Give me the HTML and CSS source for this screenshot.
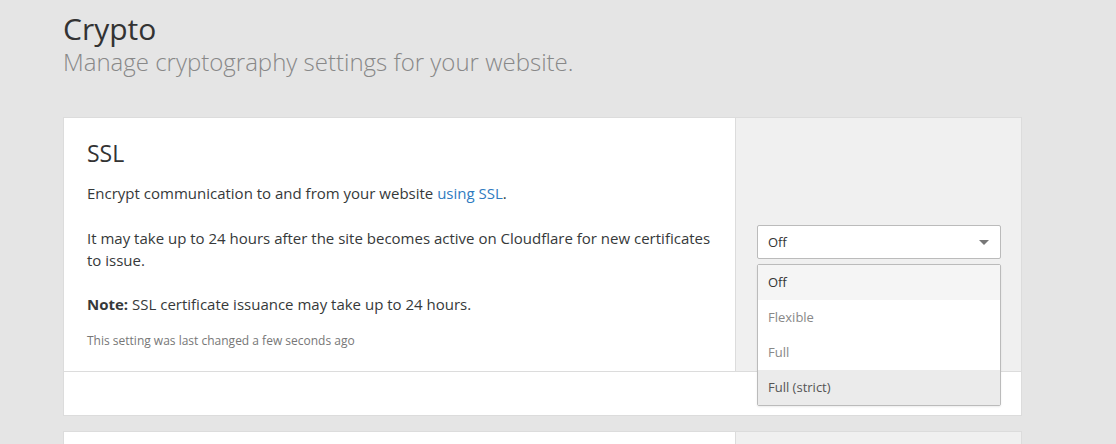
FILE: index.html
```html
<!DOCTYPE html>
<html lang="en">
<head>
<meta charset="utf-8">
<title>Crypto</title>
<link rel="stylesheet" href="styles.css">
</head>
<body>
<div class="page">
  <header class="page-header">
    <h1 class="page-title">Crypto</h1>
    <p class="page-subtitle">Manage cryptography settings for your website.</p>
  </header>

  <section class="card">
    <div class="card-main">
      <div class="card-body">
        <h2 class="card-title">SSL</h2>
        <p class="card-text">Encrypt communication to and from your website <a class="link" href="#">using SSL</a>.</p>
        <p class="card-text card-text-wrap">It may take up to 24 hours after the site becomes active on Cloudflare for new certificates to issue.</p>
        <p class="card-text card-text-note"><strong>Note:</strong> SSL certificate issuance may take up to 24 hours.</p>
        <p class="card-meta">This setting was last changed a few seconds ago</p>
      </div>
      <div class="card-control">
        <div class="select">
          <div class="select-box">
            <span class="select-value">Off</span>
            <svg class="select-arrow" width="10" height="5" viewBox="0 0 10 5"><path d="M0 0h10L5 5z" fill="#777"/></svg>
          </div>
          <ul class="select-menu">
            <li class="option option-selected">Off</li>
            <li class="option">Flexible</li>
            <li class="option">Full</li>
            <li class="option option-hover">Full (strict)</li>
          </ul>
        </div>
      </div>
    </div>
    <div class="card-footer"></div>
  </section>

  <section class="card">
    <div class="card-main card-main-next">
      <div class="card-body"></div>
      <div class="card-control"></div>
    </div>
  </section>
</div>
</body>
</html>
```

FILE: styles.css
```css
* { box-sizing: border-box; }

html, body {
  margin: 0;
  padding: 0;
  background: #e5e5e5;
  font-family: "Open Sans", "Noto Sans", "Liberation Sans", sans-serif;
  color: #333;
}

.page {
  padding: 11px 0 0 63px;
  width: 1022px;
}

.page-header {
  margin-bottom: 40px;
}

.page-title {
  margin: 0;
  font-size: 30px;
  line-height: 36px;
  font-weight: 400;
  color: #333;
}

.page-subtitle {
  margin: 0;
  font-size: 24px;
  line-height: 30px;
  font-weight: 300;
  color: #888;
}

.card {
  background: #fff;
  border: 1px solid #dcdcdc;
  margin-bottom: 15px;
}

.card-main {
  display: flex;
  min-height: 253px;
}

.card-main-next {
  min-height: 40px;
}

.card-body {
  flex: 0 0 671px;
  padding: 19px 22px 16px 23px;
}

.card-title {
  margin: 0 0 13px;
  font-size: 23px;
  line-height: 32px;
  font-weight: 400;
  color: #333;
}

.card-text {
  margin: 0 0 23px;
  font-size: 15px;
  line-height: 22px;
  color: #36393a;
}

.card-text-wrap {
  margin-bottom: 22px;
}

.card-text strong {
  font-weight: 700;
}

.link {
  color: #2f7bbf;
  text-decoration: none;
}

.card-meta {
  margin: -6px 0 0;
  font-size: 12px;
  line-height: 18px;
  color: #777;
}

.card-control {
  flex: 1;
  background: #f0f0f0;
  border-left: 1px solid #dcdcdc;
  padding: 107px 20px 0 21px;
}

.select {
  position: relative;
  width: 244px;
}

.select-box {
  height: 34px;
  background: #fff;
  border: 1px solid #bbb;
  border-radius: 2px;
  display: flex;
  align-items: center;
  justify-content: space-between;
  padding: 0 11px 0 10px;
  font-size: 13px;
  color: #333;
}

.select-arrow {
  display: block;
}

.select-menu {
  position: absolute;
  top: 39px;
  left: 0;
  width: 244px;
  margin: 0;
  padding: 0;
  list-style: none;
  background: #fff;
  border: 1px solid #bbb;
  border-radius: 2px;
  box-shadow: 0 1px 2px rgba(0, 0, 0, 0.08);
  z-index: 2;
}

.option {
  height: 35px;
  line-height: 35px;
  padding: 0 10px;
  font-size: 13px;
  color: #888;
}

.option-selected {
  background: #f5f5f5;
  color: #333;
}

.option-hover {
  background: #ebebeb;
  color: #555;
}

.card-footer {
  height: 44px;
  border-top: 1px solid #dcdcdc;
}
```
